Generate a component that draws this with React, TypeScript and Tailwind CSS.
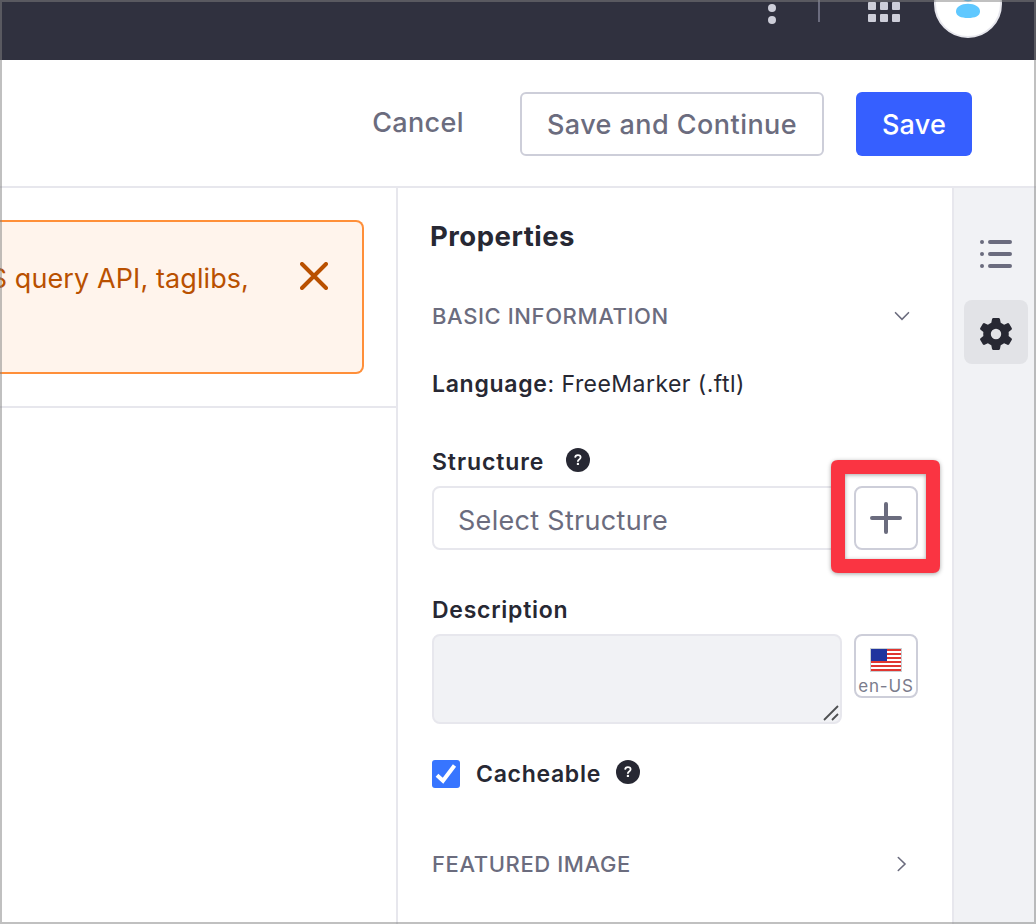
import React from "react";

function HelpIcon() {
  return (
    <svg className="h-6 w-6 shrink-0" viewBox="0 0 24 24" fill="none">
      <circle cx="12" cy="12" r="12" fill="#272833" />
      <path d="M9.1 9.6C9.2 8 10.3 7.1 11.9 7.1c1.6 0 2.7.9 2.7 2.2 0 1.1-.6 1.6-1.4 2.1-.9.6-1.3 1-1.3 1.8v.5" stroke="#fff" strokeWidth="1.8" />
      <circle cx="11.9" cy="15.9" r="1.2" fill="#fff" />
    </svg>
  );
}

function TopBar() {
  return (
    <header className="flex h-[60px] shrink-0 items-start bg-[#30313f]">
      <svg className="ml-[768px] h-6 w-2" viewBox="0 0 8 24" fill="#cdced9">
        <circle cx="4" cy="8" r="4" />
        <circle cx="4" cy="20" r="4" />
      </svg>
      <div className="ml-[42px] h-[22px] w-0.5 bg-[#6b6c7e]" />
      <svg className="ml-12 h-[22px] w-8" viewBox="0 0 32 22" fill="#cdced9">
        <rect x="0" y="2" width="8" height="8" rx="1" />
        <rect x="12" y="2" width="8" height="8" rx="1" />
        <rect x="24" y="2" width="8" height="8" rx="1" />
        <rect x="0" y="14" width="8" height="8" rx="1" />
        <rect x="12" y="14" width="8" height="8" rx="1" />
        <rect x="24" y="14" width="8" height="8" rx="1" />
      </svg>
      <svg className="ml-[34px] h-[38px] w-[68px]" viewBox="0 30 68 38">
        <circle cx="34" cy="34" r="33" fill="#fff" stroke="#e7e7ed" strokeWidth="2" />
        <circle cx="34" cy="23.5" r="8" fill="#5fc8ff" />
        <path d="M22 41.5C22 37 27 33.8 34 33.8S46 37 46 41.5C46 46 41 48 34 48S22 46 22 41.5Z" fill="#5fc8ff" />
      </svg>
    </header>
  );
}

function Toolbar() {
  return (
    <div className="flex h-32 shrink-0 items-start justify-end border-b-2 border-[#e7e7ed] pr-16 pt-8 text-[27px] font-[550] text-[#6b6c7e]">
      <button className="mr-14 flex h-[62px] w-[92px] items-center justify-center whitespace-nowrap tracking-[0.35px]">Cancel</button>
      <button className="mr-8 flex h-16 w-[304px] items-center justify-center whitespace-nowrap rounded-md border-2 border-[#cdced9] pt-0.5 tracking-[0.45px]">Save and Continue</button>
      <button className="flex h-16 w-[116px] items-center justify-center rounded-md bg-[#365fff] pt-0.5 tracking-[0.25px] text-white">Save</button>
    </div>
  );
}

function Editor() {
  return (
    <main className="w-[398px] shrink-0 border-r-2 border-[#e7e7ed]">
      <div className="flex h-[220px] items-start border-b-2 border-[#e7e7ed] pt-8">
        <div className="flex h-[154px] w-[364px] items-start justify-end overflow-hidden rounded-r-lg border-2 border-l-0 border-[#ff8f39] bg-[#fff4ec] pr-[34px] text-[#b95000]">
          <p className="mr-[51px] mt-[37px] whitespace-nowrap text-[27px] leading-10 tracking-[0.09px]">S query API, taglibs,</p>
          <svg className="mt-10 h-7 w-7 shrink-0" viewBox="0 0 28 28" fill="none" stroke="currentColor" strokeWidth="4" strokeLinecap="round">
            <path d="M2 2l24 24M26 2L2 26" />
          </svg>
        </div>
      </div>
    </main>
  );
}

function UsFlag() {
  return (
    <svg className="h-6 w-8 shrink-0" viewBox="0 0 32 24">
      <rect width="32" height="24" fill="#c8cfd4" />
      <rect x="1" y="1" width="30" height="22" fill="#fff" />
      <path d="M1 2h30M1 6h30M1 10h30M1 14h30M1 18h30M1 22h30" stroke="#e03530" strokeWidth="2" />
      <rect x="1" y="1" width="16" height="12" fill="#20349e" />
    </svg>
  );
}

function Properties() {
  return (
    <section className="w-[554px] shrink-0 pl-[34px] pr-[34px] pt-7 text-[23px] text-[#272833]">
      <h2 className="-ml-0.5 h-10 text-[27.5px] font-bold leading-10 tracking-[0.5px]">Properties</h2>
      <div className="mt-10 flex h-10 items-center justify-between pr-2 font-[550] text-[#6b6c7e]">
        <span className="text-[22px] leading-10 tracking-[0.6px]">BASIC INFORMATION</span>
        <svg className="h-4 w-4" viewBox="0 0 16 16" fill="none" stroke="currentColor" strokeWidth="1.6" strokeLinecap="round">
          <path d="M1.5 4.7L8 11.3l6.5-6.6" />
        </svg>
      </div>
      <p className="mt-7 h-10 leading-10 tracking-[0.45px]">
        <b className="font-semibold tracking-[0.7px]">Language</b>: FreeMarker (.ftl)
      </p>
      <div className="mt-9 flex h-[46px] items-start font-semibold">
        <label className="w-[134px] leading-[44px] tracking-[0.9px]">Structure</label>
        <span className="pt-2"><HelpIcon /></span>
      </div>
      <div className="flex gap-3 text-[#6b6c7e]">
        <div className="flex h-16 w-[410px] items-center rounded-lg border-2 border-[#e7e7ed] pl-6 pt-1.5 text-[27px]">
          <span className="tracking-[0.3px]">Select Structure</span>
        </div>
        <div className="relative h-16 w-16">
          <button className="flex h-16 w-16 items-center justify-center rounded-lg border-2 border-[#cdced9] bg-white">
            <svg className="h-8 w-8" viewBox="0 0 32 32" stroke="currentColor" strokeWidth="4" strokeLinecap="round">
              <path d="M2 16h28M16 2v28" />
            </svg>
          </button>
          <svg className="pointer-events-none absolute -left-[23px] -top-[26px] h-[113px] w-[110px] overflow-visible drop-shadow-[0_1px_2px_rgba(0,0,0,0.35)]" viewBox="0 0 110 113">
            <path fill="#fa3442" fillRule="evenodd" d="M7 0H102Q109 0 109 7V106Q109 113 102 113H7Q0 113 0 106V7Q0 0 7 0ZM14 14V99H95V14Z" />
          </svg>
        </div>
      </div>
      <div className="mt-10 h-11 font-semibold leading-10 tracking-[0.75px]">Description</div>
      <div className="flex gap-3">
        <div className="flex h-[90px] w-[410px] items-end justify-end rounded-lg border-2 border-[#e7e7ed] bg-[#f1f2f5] pb-px pr-px">
          <svg className="h-4 w-4" viewBox="0 0 16 16" stroke="#4f5152" strokeWidth="1.8">
            <path d="M1 15L15 1M9 15l6-6" />
          </svg>
        </div>
        <button className="flex h-16 w-16 flex-col items-center rounded-lg border-2 border-[#cdced9] pt-3 text-[17px] text-[#7b7c8c]">
          <UsFlag />
          <span className="mt-0.5 whitespace-nowrap leading-6 tracking-[0.85px]">en-US</span>
        </button>
      </div>
      <div className="mt-[30px] flex h-10 items-center font-semibold">
        <svg className="mr-4 h-7 w-7" viewBox="0 0 28 28" fill="none">
          <rect width="28" height="28" rx="3" fill="#3775ff" />
          <path d="M5 15.2l6 5.5L22.5 5.5" stroke="#fff" strokeWidth="4" />
        </svg>
        <label className="w-[140px] tracking-[0.7px]">Cacheable</label>
        <span className="mb-1"><HelpIcon /></span>
      </div>
      <div className="mt-[50px] flex h-10 items-center justify-between pr-2 font-[550] text-[#6b6c7e]">
        <span className="text-[22px] tracking-[0.6px]">FEATURED IMAGE</span>
        <svg className="h-4 w-4" viewBox="0 0 16 16" fill="none" stroke="currentColor" strokeWidth="1.6" strokeLinecap="round">
          <path d="M4.3 1.5L11 8l-6.7 6.5" />
        </svg>
      </div>
    </section>
  );
}

function Sidebar() {
  return (
    <aside className="flex flex-1 flex-col items-start border-l-2 border-[#e7e7ed] bg-[#f1f2f5] pl-2.5 pt-8">
      <button className="flex h-16 w-16 items-center justify-center pt-1 text-[#6b6c7e]">
        <svg className="h-8 w-8" viewBox="0 0 32 32" stroke="currentColor" strokeWidth="4" strokeLinecap="round">
          <path d="M2 4h.01M2 16h.01M2 28h.01M10 4h20M10 16h20M10 28h20" />
        </svg>
      </button>
      <button className="mt-4 flex h-16 w-16 items-center justify-center rounded-lg bg-[#e2e3e7] pt-1">
        <svg className="h-8 w-8" viewBox="0 0 32 32" fill="#272833">
          <path fillRule="evenodd" d="M13.5 0h5q1.2 0 1.5 1.2L20.7 4.8Q22.6 5.6 24.1 6.8L27.4 5.2Q28.5 4.8 29.2 5.8L31.7 10Q32.3 11 31.4 11.8L28.6 14Q28.9 16 28.6 18L31.4 20.2Q32.3 21 31.7 22L29.2 26.2Q28.5 27.2 27.4 26.8L24.1 25.2Q22.6 26.4 20.7 27.2L20 30.8Q19.7 32 18.5 32h-5Q12.3 32 12 30.8L11.3 27.2Q9.4 26.4 7.9 25.2L4.6 26.8Q3.5 27.2 2.8 26.2L.3 22Q-.3 21 .6 20.2L3.4 18Q3.1 16 3.4 14L.6 11.8Q-.3 11 .3 10L2.8 5.8Q3.5 4.8 4.6 5.2L7.9 6.8Q9.4 5.6 11.3 4.8L12 1.2Q12.3 0 13.5 0ZM16 10.8a5.2 5.2 0 1 0 0 10.4a5.2 5.2 0 1 0 0-10.4Z" />
        </svg>
      </button>
    </aside>
  );
}

export default function App() {
  return (
    <div className="relative flex h-[924px] w-[1036px] flex-col overflow-hidden bg-white font-['Inter',sans-serif]">
      <TopBar />
      <Toolbar />
      <div className="flex min-h-0 flex-1">
        <Editor />
        <Properties />
        <Sidebar />
      </div>
      <div className="pointer-events-none absolute inset-0 border-2 border-[#828282]/50" />
    </div>
  );
}
